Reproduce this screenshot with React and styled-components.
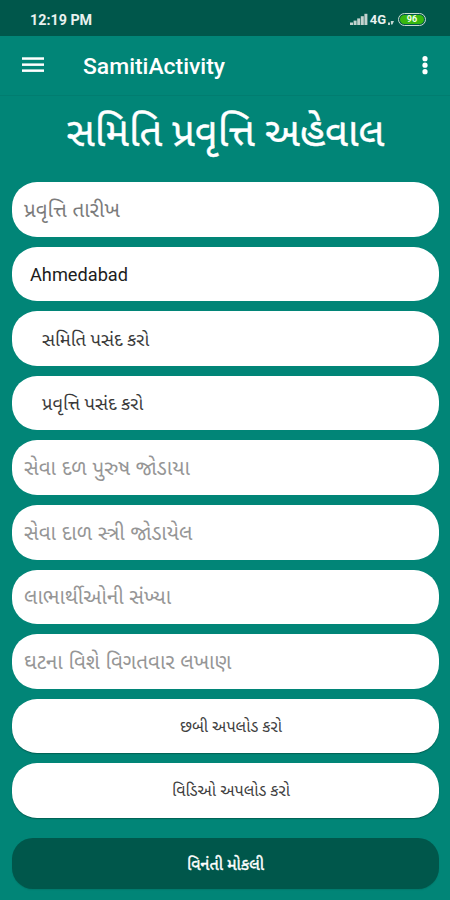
import React from 'react'
import styled, { createGlobalStyle } from 'styled-components'

const GlobalStyle = createGlobalStyle`
  * {
    box-sizing: border-box;
  }
  body {
    margin: 0;
    background: #018577;
    font-family: Roboto, "Noto Sans Gujarati", "Noto Sans", sans-serif;
  }
`

export default function App() {
  return (
    <Screen>
      <GlobalStyle />
      <StatusBar>
        <Clock>12:19 PM</Clock>
        <StatusIcons>
          <SignalIcon />
          <Network>4G</Network>
          <DataIcon />
          <Battery><Charge>96</Charge></Battery>
        </StatusIcons>
      </StatusBar>
      <AppBar>
        <MenuIcon />
        <AppName>SamitiActivity</AppName>
        <MoreIcon />
      </AppBar>
      <Title>સમિતિ પ્રવૃત્તિ અહેવાલ</Title>
      <Form>
        <Field $color="#7b7b7b">પ્રવૃત્તિ તારીખ</Field>
        <Field $color="#1c1c1c" $indent={18} $size={18.2} $drop={1}>Ahmedabad</Field>
        <Field $color="#3a3a3a" $indent={30} $size={18.3}>સમિતિ પસંદ કરો</Field>
        <Field $color="#3a3a3a" $indent={30} $size={18.3}>પ્રવૃત્તિ પસંદ કરો</Field>
        <Field>સેવા દળ પુરુષ જોડાયા</Field>
        <Field>સેવા દાળ સ્ત્રી જોડાયેલ</Field>
        <Field>લાભાર્થીઓની સંખ્યા</Field>
        <Field>ઘટના વિશે વિગતવાર લખાણ</Field>
        <UploadButton>છબી અપલોડ કરો</UploadButton>
        <UploadButton>વિડિઓ અપલોડ કરો</UploadButton>
        <SubmitButton>વિનંતી મોકલી</SubmitButton>
      </Form>
    </Screen>
  )
}

function SignalIcon() {
  return (
    <svg width="18" height="13" viewBox="0 0 18 13" fill="#c3d3cf">
      <rect x="0" y="9.5" width="3" height="2.5" />
      <rect x="3.6" y="7.6" width="3" height="4.4" />
      <rect x="7.2" y="5.4" width="3" height="6.6" />
      <rect x="10.8" y="3.2" width="3" height="8.8" />
      <rect x="14.4" y="0.8" width="3" height="11.2" />
    </svg>
  )
}

function DataIcon() {
  return (
    <svg width="6" height="5" viewBox="0 0 6 5" fill="#c3d6d1">
      <path d="M0 2.5h2v2.5H0zM2.8 1H6L4.4 4.5H3z" />
    </svg>
  )
}

function MenuIcon() {
  return (
    <svg width="22" height="16" viewBox="0 0 22 16" fill="#fff">
      <rect y="0.3" width="22" height="2.5" />
      <rect y="6.4" width="22" height="2.5" />
      <rect y="12.4" width="22" height="2.5" />
    </svg>
  )
}

function MoreIcon() {
  return (
    <svg width="6" height="20" viewBox="0 0 6 20" fill="#fff">
      <circle cx="3" cy="3.7" r="2.6" />
      <circle cx="3" cy="10.2" r="2.6" />
      <circle cx="3" cy="16.7" r="2.6" />
    </svg>
  )
}

const Screen = styled.div`
  height: 900px;
  overflow: hidden;
`

const StatusBar = styled.div`
  display: flex;
  justify-content: space-between;
  align-items: center;
  height: 36px;
  padding: 3px 24px 0 30px;
  background: #00574b;
  color: #e9f1ef;
`

const Clock = styled.span`
  font-size: 14.3px;
  font-weight: 700;
`

const StatusIcons = styled.div`
  display: flex;
  align-items: center;

  svg:nth-of-type(2) {
    margin: 5px 4px 0 2px;
  }
`

const Network = styled.span`
  margin-left: 2px;
  font-size: 13px;
  font-weight: 700;
`

const Battery = styled.span`
  display: flex;
  width: 28px;
  height: 13px;
  padding: 1px;
  border: 1.5px solid #c9dcd0;
  border-radius: 6.5px;
`

const Charge = styled.span`
  flex: 1;
  border-radius: 4.5px;
  background: #37b70f;
  color: #f2fff0;
  font-size: 9px;
  font-weight: 700;
  line-height: 9px;
  text-align: center;
`

const AppBar = styled.header`
  display: flex;
  align-items: center;
  height: 60px;
  padding: 0 22px 1px;
  border-bottom: 1px solid #017d70;

  svg:last-child {
    margin-left: auto;
  }
`

const AppName = styled.span`
  margin-left: 39px;
  padding-top: 2px;
  color: #fff;
  font-size: 22.9px;
  font-weight: 500;
`

const Title = styled.h1`
  height: 86.3px;
  margin: 0;
  padding-left: 1px;
  color: #fff;
  font-size: 39.8px;
  font-weight: 400;
  line-height: 74px;
  text-align: center;
  white-space: nowrap;
  -webkit-text-stroke: 0.4px #fff;
`

const Form = styled.form`
  display: flex;
  flex-direction: column;
  gap: 10px;
  padding: 0 11px 0 12px;
`

const Field = styled.div`
  display: flex;
  align-items: center;
  height: 54.55px;
  padding-top: ${({ $drop }) => $drop || 4}px;
  padding-left: ${({ $indent }) => $indent || 12}px;
  border-radius: 25px;
  background: #fff;
  color: ${({ $color }) => $color || '#969696'};
  font-size: ${({ $size }) => $size || 20.6}px;
  word-spacing: ${({ $size }) => ($size ? 0 : 0.6)}px;
  white-space: nowrap;
`

const UploadButton = styled.button.attrs({ type: 'button' })`
  height: 54.55px;
  padding: 4px 0 0 11px;
  border: 0;
  border-radius: 25px;
  background: #fff;
  box-shadow: 0 1px 1px rgba(0, 60, 50, 0.5);
  color: #404040;
  font-family: inherit;
  font-size: 16.2px;
`

const SubmitButton = styled(UploadButton)`
  height: 51px;
  margin-top: 10.5px;
  padding: 5px 0 0;
  border-radius: 21px;
  background: #00574b;
  box-shadow: 0 1px 1px rgba(0, 60, 50, 0.15);
  color: #fff;
  -webkit-text-stroke: 0.4px #fff;
`
